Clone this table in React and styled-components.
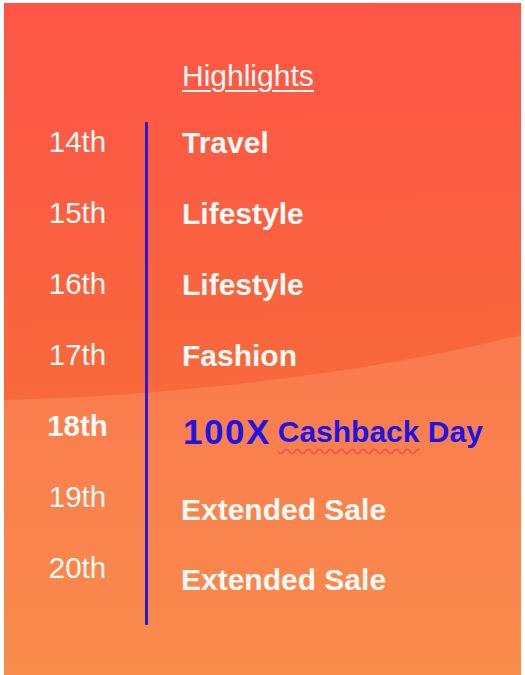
import React from "react";
import styled, { createGlobalStyle } from "styled-components";

const Global = createGlobalStyle`
  html, body { margin: 0; padding: 0; background: #ffffff; }
  body { font-family: "Liberation Sans", Arial, sans-serif; }
`;

const Card = styled.div`
  position: relative;
  margin: 3px 4px 0 4px;
  height: 672px;
  overflow: hidden;
  background: linear-gradient(178deg, #fe5646 0%, #fc5c43 25%, #f9663d 50%, #f86b3c 62%);
  display: flex;
  flex-direction: column;
  padding-top: 56px;
  box-sizing: border-box;
`;

const Backdrop = styled.svg`
  position: absolute;
  inset: 0;
  width: 100%;
  height: 100%;
  z-index: 0;
`;

const Content = styled.div`
  position: relative;
  z-index: 1;
  display: flex;
  flex-direction: column;
`;

const Title = styled.div`
  padding-left: 178px;
  height: 34px;
  line-height: 34px;
  font-size: 30px;
  color: #fffaf4;
  text-decoration: underline;
  text-decoration-thickness: 2px;
  text-underline-offset: 4px;
`;

const Timeline = styled.div`
  margin-top: 13px;
  display: grid;
  grid-template-columns: 141px 3px 1fr;
  grid-template-rows: repeat(7, 71px) 22px;
`;

const DateCell = styled.div`
  grid-column: 1;
  display: flex;
  align-items: center;
  justify-content: center;
  padding-left: 6px;
  font-size: 29.5px;
  font-weight: ${(p) => (p.$bold ? 700 : 400)};
  color: #fffaf4;
`;

const Divider = styled.div`
  grid-column: 2;
  grid-row: 1 / -1;
  margin-top: 16px;
  background: #2a1ad8;
  border-radius: 1px;
`;

const LabelCell = styled.div`
  grid-column: 3;
  display: flex;
  align-items: center;
  padding-left: ${(p) => p.$indent ?? 34}px;
  padding-top: ${(p) => (p.$shift ?? 0) * 2 + 2}px;
  font-size: 30px;
  font-weight: 700;
  color: #fffaf4;
  white-space: nowrap;
`;

const Big = styled.span`
  font-size: 35px;
  letter-spacing: 1.5px;
  color: #1d14e6;
  margin-right: 7px;
`;

const Blue = styled.span`
  font-size: 30px;
  color: #1d14e6;
`;

const Misspelt = styled(Blue)`
  text-decoration: underline wavy #ef5a52;
  text-decoration-thickness: 1.5px;
  text-underline-offset: 6px;
`;

const rows = [
  { d: "14th", l: "Travel" },
  { d: "15th", l: "Lifestyle" },
  { d: "16th", l: "Lifestyle" },
  { d: "17th", l: "Fashion" },
  { d: "18th", bold: true, special: true, shift: 5, indent: 35 },
  { d: "19th", l: "Extended Sale", shift: 12, indent: 33 },
  { d: "20th", l: "Extended Sale", shift: 11, indent: 33 },
];

export default function App() {
  return (
    <>
      <Global />
      <Card>
        <Backdrop viewBox="0 0 517 672" preserveAspectRatio="none">
          <defs>
            <linearGradient id="low" x1="0" y1="0" x2="0" y2="1">
              <stop offset="0" stopColor="#fa7a4f" />
              <stop offset="1" stopColor="#f98b4b" />
            </linearGradient>
          </defs>
          <path d="M0 397 C 160 393, 360 372, 517 332 L 517 672 L 0 672 Z" fill="url(#low)" />
        </Backdrop>
        <Content>
          <Title>Highlights</Title>
          <Timeline>
            <Divider />
            {rows.map((r, i) => (
              <React.Fragment key={r.d}>
                <DateCell $bold={r.bold} style={{ gridRow: i + 1 }}>
                  {r.d}
                </DateCell>
                <LabelCell $shift={r.shift} $indent={r.indent} style={{ gridRow: i + 1 }}>
                  {r.special ? (
                    <>
                      <Big>100X</Big>
                      <Misspelt>Cashback</Misspelt>
                      <Blue>&nbsp;Day</Blue>
                    </>
                  ) : (
                    r.l
                  )}
                </LabelCell>
              </React.Fragment>
            ))}
          </Timeline>
        </Content>
      </Card>
    </>
  );
}
